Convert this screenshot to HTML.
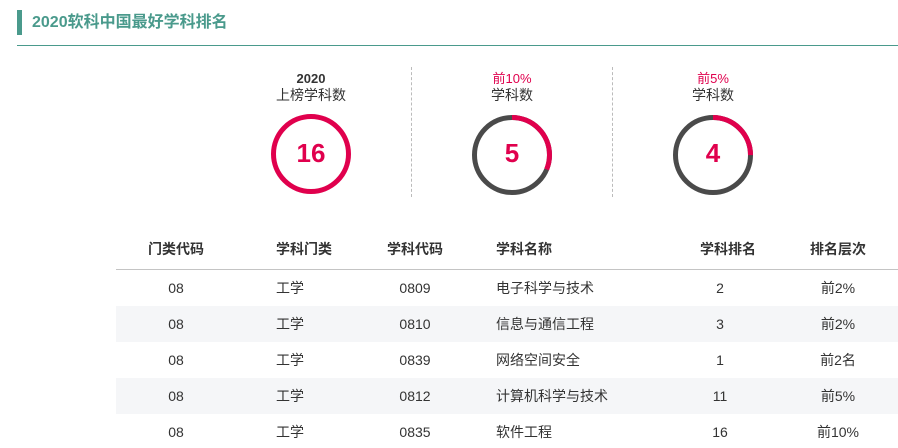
<!DOCTYPE html>
<html><head><meta charset="utf-8"><style>
*{margin:0;padding:0;box-sizing:border-box}
body{width:898px;height:448px;background:#fff;position:relative;overflow:hidden;font-family:"Liberation Sans","Noto Sans CJK SC",sans-serif;color:#333}
.a{position:absolute;white-space:nowrap}
.c{transform:translateX(-50%)}
.t{font-size:14px;line-height:17px}
.h{font-size:14px;font-weight:bold;color:#333}
.r{color:#e0004d}
</style></head><body>
<div class="a" style="left:17px;top:10px;width:5px;height:25px;background:#4a9a8c"></div>
<div class="a" style="left:32px;top:12px;font-size:16px;font-weight:bold;color:#4a9a8c;line-height:22px">2020软科中国最好学科排名</div>
<div class="a" style="left:17px;top:45px;width:881px;height:1px;background:#4a9a8c"></div>

<div class="a" style="left:411px;top:67px;height:130px;border-left:1px dashed #bbb"></div>
<div class="a" style="left:612px;top:67px;height:130px;border-left:1px dashed #bbb"></div>

<div class="a c t" style="left:311px;top:70px;font-weight:bold;text-align:center;font-size:13px">2020<br><span style="font-weight:normal;font-size:14px">上榜学科数</span></div>
<div class="a c t" style="left:512px;top:70px;text-align:center"><span class="r" style="font-size:13px">前10%</span><br>学科数</div>
<div class="a c t" style="left:713px;top:70px;text-align:center"><span class="r" style="font-size:13px">前5%</span><br>学科数</div>

<svg class="a" style="left:0;top:0" width="898" height="448">
<circle cx="311" cy="154" r="37.5" fill="none" stroke="#e0004d" stroke-width="5"/>
<circle cx="512" cy="155" r="37.5" fill="none" stroke="#4a4a4a" stroke-width="5"/>
<circle cx="512" cy="155" r="37.5" fill="none" stroke="#e0004d" stroke-width="5" stroke-dasharray="73.6 300" transform="rotate(-90 512 155)"/>
<circle cx="713" cy="155" r="37.5" fill="none" stroke="#4a4a4a" stroke-width="5"/>
<circle cx="713" cy="155" r="37.5" fill="none" stroke="#e0004d" stroke-width="5" stroke-dasharray="58.9 300" transform="rotate(-90 713 155)"/>
</svg>
<div class="a c r" style="left:311px;top:138px;font-size:26px;font-weight:bold;line-height:30px">16</div>
<div class="a c r" style="left:512px;top:138px;font-size:26px;font-weight:bold;line-height:30px">5</div>
<div class="a c r" style="left:713px;top:138px;font-size:26px;font-weight:bold;line-height:30px">4</div>

<div class="a" style="left:116px;top:306px;width:782px;height:36px;background:#f5f6f8"></div>
<div class="a" style="left:116px;top:378px;width:782px;height:36px;background:#f5f6f8"></div>
<div class="a" style="left:116px;top:269px;width:782px;height:1px;background:#c4c4c4"></div>

<div class="a c h" style="left:176px;top:239px">门类代码</div>
<div class="a h" style="left:276px;top:239px">学科门类</div>
<div class="a c h" style="left:415px;top:239px">学科代码</div>
<div class="a h" style="left:496px;top:239px">学科名称</div>
<div class="a c h" style="left:728px;top:239px">学科排名</div>
<div class="a c h" style="left:838px;top:239px">排名层次</div>

<div class="a c t" style="left:176px;top:280px">08</div><div class="a t" style="left:276px;top:280px">工学</div><div class="a c t" style="left:415px;top:280px">0809</div><div class="a t" style="left:496px;top:280px">电子科学与技术</div><div class="a c t" style="left:720px;top:280px">2</div><div class="a c t" style="left:838px;top:280px">前2%</div>
<div class="a c t" style="left:176px;top:316px">08</div><div class="a t" style="left:276px;top:316px">工学</div><div class="a c t" style="left:415px;top:316px">0810</div><div class="a t" style="left:496px;top:316px">信息与通信工程</div><div class="a c t" style="left:720px;top:316px">3</div><div class="a c t" style="left:838px;top:316px">前2%</div>
<div class="a c t" style="left:176px;top:352px">08</div><div class="a t" style="left:276px;top:352px">工学</div><div class="a c t" style="left:415px;top:352px">0839</div><div class="a t" style="left:496px;top:352px">网络空间安全</div><div class="a c t" style="left:720px;top:352px">1</div><div class="a c t" style="left:838px;top:352px">前2名</div>
<div class="a c t" style="left:176px;top:388px">08</div><div class="a t" style="left:276px;top:388px">工学</div><div class="a c t" style="left:415px;top:388px">0812</div><div class="a t" style="left:496px;top:388px">计算机科学与技术</div><div class="a c t" style="left:720px;top:388px">11</div><div class="a c t" style="left:838px;top:388px">前5%</div>
<div class="a c t" style="left:176px;top:424px">08</div><div class="a t" style="left:276px;top:424px">工学</div><div class="a c t" style="left:415px;top:424px">0835</div><div class="a t" style="left:496px;top:424px">软件工程</div><div class="a c t" style="left:720px;top:424px">16</div><div class="a c t" style="left:838px;top:424px">前10%</div>
</body></html>
